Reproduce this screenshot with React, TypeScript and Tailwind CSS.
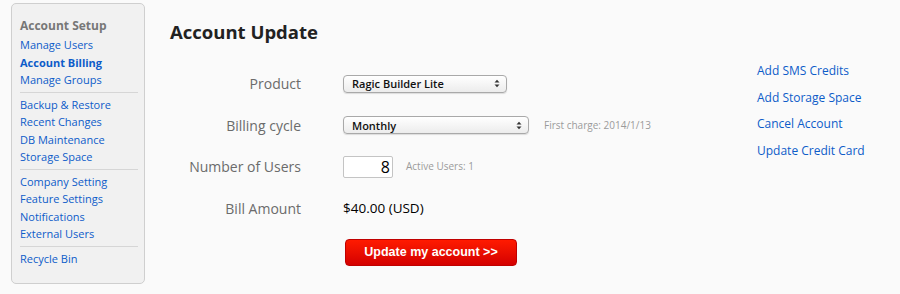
const groups = [
  ["Manage Users", "Account Billing", "Manage Groups"],
  ["Backup & Restore", "Recent Changes", "DB Maintenance", "Storage Space"],
  ["Company Setting", "Feature Settings", "Notifications", "External Users"],
  ["Recycle Bin"],
];

const sideLinks = ["Add SMS Credits", "Add Storage Space", "Cancel Account", "Update Credit Card"];

function Arrows() {
  return (
    <svg width="6" height="9" viewBox="0 0 6 9" className="shrink-0">
      <path d="M0.5 3.5L3 0.8L5.5 3.5Z" fill="#333" />
      <path d="M0.5 5.5L3 8.2L5.5 5.5Z" fill="#333" />
    </svg>
  );
}

function FakeSelect({ value, width }: { value: string; width: string }) {
  return (
    <div
      className={`${width} h-[18px] flex items-center justify-between pl-[8px] pr-[6px] rounded-[4px] border border-[#a9a9a9] bg-gradient-to-b from-white to-[#ececec] shadow-[0_1px_1px_rgba(0,0,0,0.12)] text-[11px] font-semibold text-[#111]`}
    >
      <span className="leading-none">{value}</span>
      <Arrows />
    </div>
  );
}

function Row({ label, children }: { label: string; children: React.ReactNode }) {
  return (
    <div className="flex items-center h-[41.5px]">
      <div className="w-[131px] text-right text-[14px] text-[#6b6b6b]">{label}</div>
      <div className="ml-[42px] flex items-center">{children}</div>
    </div>
  );
}

export default function App() {
  return (
    <div
      className="w-[900px] h-[294px] bg-[#fafafa] flex"
      style={{ fontFamily: '"Open Sans", "Liberation Sans", sans-serif' }}
    >
      <div className="ml-[11px] mt-[3px] w-[134px] h-[281px] rounded-[5px] border border-[#cfcfcf] bg-[#f1f1f1] pl-[8px] pr-[6px] pt-[13px]">
        <div className="text-[12px] font-bold text-[#777] leading-[17px]">Account Setup</div>
        <div className="mt-[2px]">
          {groups.map((g, gi) => (
            <div key={gi} className={gi > 0 ? "border-t border-[#d6d6d6] mt-[3px] pt-[3px]" : ""}>
              {g.map((item) => (
                <div
                  key={item}
                  className={`text-[11px] leading-[17.5px] text-[#0d5cc9] ${item === "Account Billing" ? "font-bold" : ""}`}
                >
                  {item}
                </div>
              ))}
            </div>
          ))}
        </div>
      </div>

      <div className="ml-[25px] pt-[19px] flex-1">
        <h1 className="text-[18.5px] font-bold text-[#222] leading-[26px]">Account Update</h1>
        <div className="mt-[18px]">
          <Row label="Product">
            <FakeSelect value="Ragic Builder Lite" width="w-[164px]" />
          </Row>
          <Row label="Billing cycle">
            <FakeSelect value="Monthly" width="w-[186px]" />
            <span className="ml-[15px] text-[10px] text-[#9a9a9a]">First charge: 2014/1/13</span>
          </Row>
          <Row label="Number of Users">
            <div className="w-[50px] h-[22px] border border-[#c4c4c4] rounded-[2px] bg-white flex items-center justify-end pr-[2px] text-[16px] text-black">
              8
            </div>
            <span className="ml-[13px] text-[10px] text-[#9a9a9a]">Active Users: 1</span>
          </Row>
          <Row label="Bill Amount">
            <span className="text-[13.5px] text-black">$40.00 (USD)</span>
          </Row>
          <div className="ml-[175px] mt-[9px]">
            <button
              className="w-[172px] h-[27px] rounded-[4px] bg-gradient-to-b from-[#ff1a00] to-[#d40000] border border-[#c00000] text-white text-[12.5px] font-bold"
              style={{ fontFamily: '"Liberation Sans", Arial, sans-serif' }}
            >
              Update my account &gt;&gt;
            </button>
          </div>
        </div>
      </div>

      <div className="w-[143px] pt-[58px] flex flex-col">
        {sideLinks.map((l) => (
          <div key={l} className="text-[12px] leading-[26.7px] text-[#0d5cc9]">
            {l}
          </div>
        ))}
      </div>
    </div>
  );
}
